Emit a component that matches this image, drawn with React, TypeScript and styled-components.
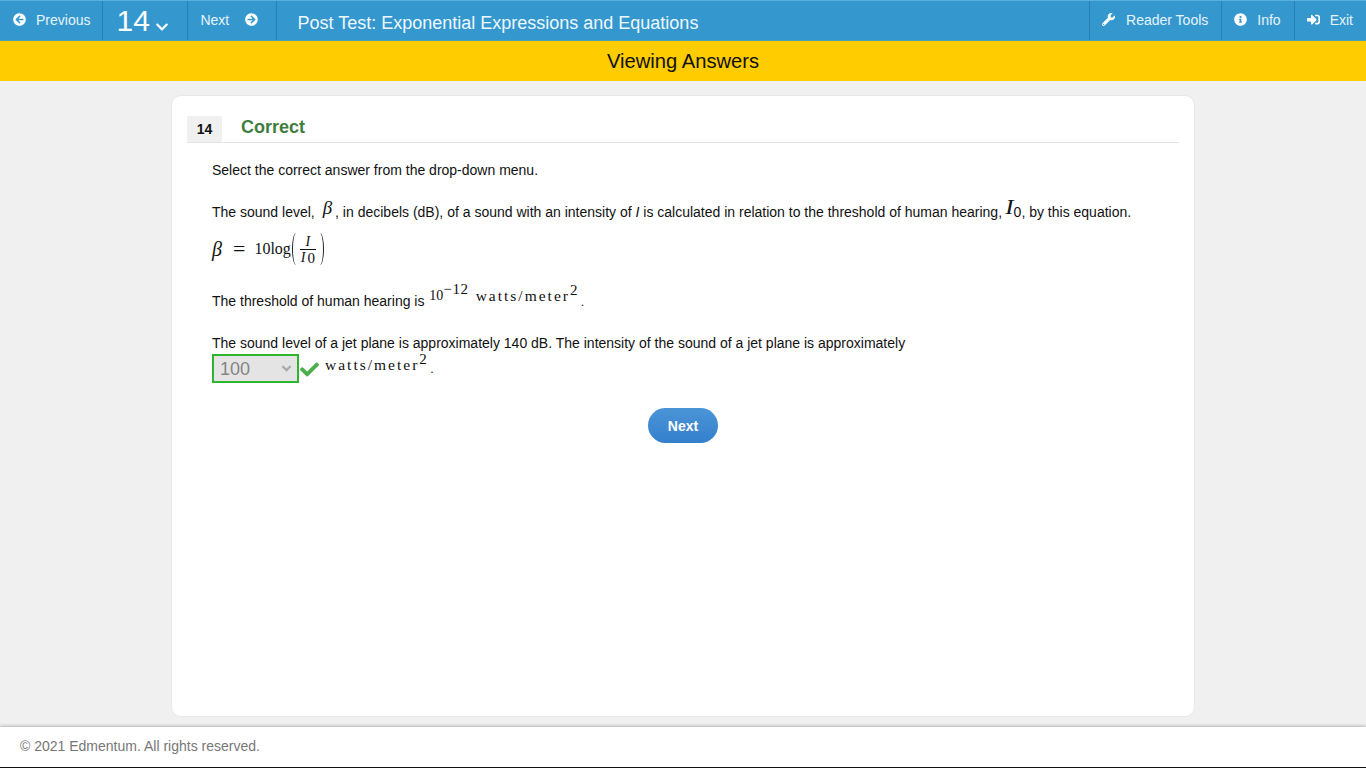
import React from 'react';
import styled, { createGlobalStyle } from 'styled-components';
import {
  FaAngleDown,
  FaArrowCircleLeft,
  FaArrowCircleRight,
  FaCheck,
  FaChevronDown,
  FaInfoCircle,
  FaSignInAlt,
  FaWrench,
} from 'react-icons/fa';

const GlobalStyle = createGlobalStyle`
  html, body {
    margin: 0;
    padding: 0;
    height: 100%;
    background: #f0f0f0;
    font-family: 'Liberation Sans', Arial, sans-serif;
    font-size: 14px;
    color: #111;
  }
  #root {
    height: 100%;
  }
`;

const Page = styled.div`
  height: 768px;
  display: flex;
  flex-direction: column;
  overflow: hidden;
`;

const TopBar = styled.header`
  height: 41px;
  flex: none;
  box-sizing: border-box;
  display: flex;
  align-items: stretch;
  background: #3498cf;
  border-top: 1px solid #5aaedc;
  border-bottom: 1px solid #4f9fb5;
  color: #fff;
`;

const NavButton = styled.div<{ $left?: boolean }>`
  display: flex;
  flex: none;
  align-items: center;
  gap: 10px;
  box-sizing: border-box;
  padding: ${(p) => (p.$left ? '0 13px 2px 12px' : '0 12px 2px 13px')};
  font-size: 14px;
  color: #e6f3fa;
  border-right: ${(p) => (p.$left ? 'none' : '1px solid #2a80b2')};
  border-left: ${(p) => (p.$left ? '1px solid #2a80b2' : 'none')};
  svg {
    font-size: 13px;
    color: #fff;
  }
`;

const QuestionPicker = styled(NavButton)`
  width: 85px;
  padding: 0 0 0 13px;
  font-size: 30px;
  color: #fff;
  gap: 5px;
  svg {
    font-size: 14px;
    margin-top: 12px;
  }
`;

const ForwardButton = styled(NavButton)`
  width: 89px;
  padding-left: 12px;
  gap: 16px;
`;

const ToolsButton = styled(NavButton)`
  gap: 11px;
`;

const TestTitle = styled.div`
  flex: 1;
  display: flex;
  align-items: center;
  padding: 6px 0 0 20px;
  font-size: 18px;
  color: #eef7fc;
`;

const StatusBar = styled.div`
  height: 40px;
  flex: none;
  display: flex;
  align-items: center;
  justify-content: center;
  background: #ffcc00;
  font-size: 20.2px;
  color: #111;
`;

const Main = styled.main`
  flex: 1;
  min-height: 0;
  box-sizing: border-box;
  padding: 14px 171px 10px;
`;

const Card = styled.section`
  height: 100%;
  box-sizing: border-box;
  padding: 20px 15px 0;
  background: #fff;
  border: 1px solid #e8e8e8;
  border-radius: 10px;
`;

const ResultHeader = styled.div`
  height: 26px;
  display: flex;
  align-items: stretch;
  border-bottom: 1px solid #e4e4e4;
`;

const QuestionNumber = styled.div`
  width: 35px;
  display: flex;
  align-items: center;
  justify-content: center;
  background: #f0f0f0;
  font-size: 14px;
  font-weight: 700;
  box-sizing: border-box;
`;

const ResultLabel = styled.h2`
  margin: 0 0 0 19px;
  font-size: 18px;
  line-height: 22px;
  font-weight: 700;
  color: #3f7d3f;
`;

const Body = styled.div`
  padding: 19px 25px 0;
  line-height: 16px;
`;

const Line = styled.p<{ $top: number }>`
  margin: ${(p) => p.$top}px 0 0;
  display: flex;
  align-items: baseline;
  white-space: pre;
  height: 16px;
`;

const Spacer = styled.span<{ $w: number }>`
  width: ${(p) => p.$w}px;
`;

const MathText = styled.span`
  font-family: 'Liberation Serif', 'Times New Roman', serif;
  font-size: 16px;
  color: #111;
`;

const MathVar = styled(MathText)`
  font-style: italic;
  font-size: 19px;
  position: relative;
  top: -3px;
`;

const WideVar = styled(MathVar)`
  font-size: 20px;
  transform: scaleX(1.25);
`;

const EquationVar = styled(MathVar)`
  top: 0;
  font-size: 20px;
`;

const Units = styled(MathText)<{ $lift: number }>`
  font-size: 15.5px;
  letter-spacing: 2px;
  position: relative;
  top: ${(p) => -p.$lift}px;
`;

const Power = styled(Units)`
  font-size: 14px;
  letter-spacing: 0;
`;

const Sup = styled.span`
  font-size: 15px;
  letter-spacing: 0.6px;
  position: relative;
  top: -6px;
`;

const Period = styled(MathText)`
  font-size: 12px;
  margin-left: 3px;
`;

const Equation = styled.div`
  margin-top: 14px;
  height: 34px;
  display: flex;
  align-items: center;
`;

const EqualSign = styled(MathText)`
  font-size: 22px;
  margin: 0 9px 0 11px;
  line-height: 20px;
`;

const Paren = styled.span<{ $close?: boolean }>`
  width: 8px;
  height: 32px;
  box-sizing: border-box;
  border-radius: 50%;
  margin: ${(p) => (p.$close ? '0 0 0 0' : '0 0 0 1px')};
  border-left: ${(p) => (p.$close ? 'none' : '1.6px solid #222')};
  border-right: ${(p) => (p.$close ? '1.6px solid #222' : 'none')};
`;

const Fraction = styled.span`
  display: inline-flex;
  flex-direction: column;
  align-items: center;
  font-family: 'Liberation Serif', 'Times New Roman', serif;
  font-size: 14px;
  line-height: 15px;
  font-style: italic;
  width: 16px;
`;

const Denominator = styled.span`
  border-top: 1px solid #111;
  width: 100%;
  text-align: center;
  white-space: nowrap;
`;

const Subscript = styled.span`
  font-style: normal;
  font-size: 15px;
  position: relative;
  top: 1px;
  margin-left: 2px;
`;

const SelectBox = styled.div`
  width: 87px;
  height: 29px;
  box-sizing: border-box;
  border: 2px solid #2eb52e;
  background: #e4e4e4;
  color: #858585;
  font-size: 18px;
  display: flex;
  align-items: center;
  justify-content: space-between;
  padding: 0 3px 0 6px;
  svg {
    font-size: 15px;
    color: #a9a9a9;
  }
`;

const AnswerRow = styled.div`
  margin-top: 3px;
  height: 29px;
  display: flex;
  align-items: center;
  svg.tick {
    font-size: 19px;
    color: #4cae4c;
    margin: 2px 6px 0 1px;
  }
`;

const Actions = styled.div`
  margin-top: 25px;
  display: flex;
  justify-content: center;
`;

const NextButton = styled.button`
  width: 70px;
  height: 35px;
  border: none;
  border-radius: 18px;
  background: linear-gradient(#4a94d8, #3580cc);
  color: #fff;
  font-family: inherit;
  font-size: 14px;
  font-weight: 700;
`;

const Footer = styled.footer`
  height: 41px;
  flex: none;
  box-sizing: border-box;
  display: flex;
  align-items: center;
  padding: 0 0 2px 20px;
  background: #fff;
  border-bottom: 1px solid #111;
  box-shadow: 0 -1px 3px rgba(0, 0, 0, 0.25);
  font-size: 14px;
  color: #777;
`;

const App: React.FC = () => {
  return (
    <Page>
      <GlobalStyle />
      <TopBar>
        <NavButton>
          <FaArrowCircleLeft /> Previous
        </NavButton>
        <QuestionPicker>
          14 <FaChevronDown />
        </QuestionPicker>
        <ForwardButton>
          Next <FaArrowCircleRight />
        </ForwardButton>
        <TestTitle>Post Test: Exponential Expressions and Equations</TestTitle>
        <ToolsButton $left>
          <FaWrench /> Reader Tools
        </ToolsButton>
        <NavButton $left>
          <FaInfoCircle /> Info
        </NavButton>
        <NavButton $left>
          <FaSignInAlt /> Exit
        </NavButton>
      </TopBar>
      <StatusBar>Viewing Answers</StatusBar>
      <Main>
        <Card>
          <ResultHeader>
            <QuestionNumber>14</QuestionNumber>
            <ResultLabel>Correct</ResultLabel>
          </ResultHeader>
          <Body>
            <Line $top={0}>Select the correct answer from the drop-down menu.</Line>
            <Line $top={24}>
              The sound level, <Spacer $w={4} />
              <MathVar>β</MathVar>
              <Spacer $w={3} />, in decibels (dB), of a sound with an intensity of <i>I</i> is
              calculated in relation to the threshold of human hearing, <WideVar>I</WideVar>
              <Spacer $w={1} />0, by this equation.
            </Line>
            <Equation>
              <EquationVar>β</EquationVar>
              <EqualSign>=</EqualSign>
              <MathText>10log</MathText>
              <Paren />
              <Fraction>
                <span>I</span>
                <Denominator>
                  I<Subscript>0</Subscript>
                </Denominator>
              </Fraction>
              <Paren $close />
            </Equation>
            <Line $top={27}>
              The threshold of human hearing is <Spacer $w={1} />
              <Power $lift={6}>
                10<Sup>−12</Sup>
              </Power>
              <Spacer $w={7} />
              <Units $lift={5}>
                watts/meter<Sup>2</Sup>
              </Units>
              <Period>.</Period>
            </Line>
            <Line $top={26}>
              The sound level of a jet plane is approximately 140 dB. The intensity of the sound of
              a jet plane is approximately
            </Line>
            <AnswerRow>
              <SelectBox>
                100 <FaAngleDown />
              </SelectBox>
              <FaCheck className="tick" />
              <Units $lift={4}>
                watts/meter<Sup>2</Sup>
              </Units>
              <Period>.</Period>
            </AnswerRow>
            <Actions>
              <NextButton>Next</NextButton>
            </Actions>
          </Body>
        </Card>
      </Main>
      <Footer>© 2021 Edmentum. All rights reserved.</Footer>
    </Page>
  );
};

export default App;
